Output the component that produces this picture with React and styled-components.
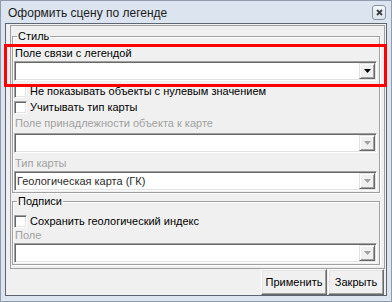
import styled, { createGlobalStyle } from "styled-components";

const GlobalStyle = createGlobalStyle`
  html, body {
    margin: 0;
    padding: 0;
    background: #ffffff;
  }
  body {
    font-family: "Liberation Sans", Arial, sans-serif;
    font-size: 11px;
    color: #000;
  }
`;

const Window = styled.div`
  position: relative;
  box-sizing: border-box;
  width: 392px;
  height: 302px;
  display: flex;
  flex-direction: column;
  padding: 0 4px 5px 4px;
  background: #dbe4ef;
  border: 1px solid #8f9cab;
`;

const TitleBar = styled.div`
  height: 22px;
  display: flex;
  align-items: center;
  justify-content: space-between;
  padding: 1px 1px 0 3px;
  box-sizing: border-box;
`;

const Title = styled.span`
  font-size: 12px;
  color: #1b1b1b;
`;

const CloseButton = styled.div`
  box-sizing: border-box;
  width: 14px;
  height: 15px;
  display: flex;
  align-items: center;
  justify-content: center;
  border: 1px solid #8894a3;
  border-radius: 3px;
  background: linear-gradient(#f4f7fa, #dde4ec);
`;

const Client = styled.div`
  flex: 1;
  display: flex;
  flex-direction: column;
  background: #f0f0f0;
  border: 1px solid #5c6570;
`;

const Panel = styled.div`
  flex: 1;
  display: flex;
  flex-direction: column;
  margin: 1px 1px 0 4px;
  border: 1px solid #a0a0a0;
`;

const GroupBox = styled.fieldset`
  margin: ${(p) => p.$mt}px 4px 0 1px;
  padding: ${(p) => p.$pt}px 2px 1px 1px;
  min-width: 0;
  border: 1px solid #a0a0a0;
  box-shadow: inset 1px 1px 0 #fff, 1px 1px 0 #fff;
  display: flex;
  flex-direction: column;
`;

const Legend = styled.legend`
  margin-left: 3px;
  padding: 0 1px;
  line-height: 13px;
`;

const Label = styled.div`
  height: 13px;
  line-height: 13px;
  padding-left: 1px;
  margin-top: ${(p) => p.$mt || 0}px;
  color: ${(p) => (p.$disabled ? "#a0a0a0" : "#000")};
  white-space: nowrap;
`;

const Combo = styled.div`
  box-sizing: border-box;
  height: 20px;
  margin-top: ${(p) => p.$mt || 0}px;
  display: flex;
  align-items: center;
  background: #fff;
  border-style: solid;
  border-width: 1px;
  border-color: #a0a0a0 #fff #fff #a0a0a0;
  box-shadow: inset 1px 1px 0 #696969, inset -1px -1px 0 #e3e3e3;
  padding: 1px 1px 1px 2px;
`;

const ComboText = styled.span`
  flex: 1;
  color: #2b2b2b;
  white-space: nowrap;
`;

const DropButton = styled.div`
  box-sizing: border-box;
  width: 16px;
  height: 16px;
  display: flex;
  align-items: center;
  justify-content: center;
  background: #f0f0f0;
  border-style: solid;
  border-width: 1px;
  border-color: #e3e3e3 #696969 #696969 #e3e3e3;
  box-shadow: inset 1px 1px 0 #fff, inset -1px -1px 0 #a0a0a0;
`;

const CheckRow = styled.div`
  height: 16px;
  margin-top: ${(p) => p.$mt || 0}px;
  display: flex;
  align-items: center;
  gap: 3px;
  white-space: nowrap;
`;

const CheckBox = styled.span`
  box-sizing: border-box;
  width: 13px;
  height: 13px;
  flex-shrink: 0;
  background: #fff;
  border-style: solid;
  border-width: 1px;
  border-color: #a0a0a0 #fff #fff #a0a0a0;
  box-shadow: inset 1px 1px 0 #696969, inset -1px -1px 0 #e3e3e3;
`;

const ButtonBar = styled.div`
  height: 26px;
  display: flex;
  justify-content: flex-end;
  gap: 1px;
  padding-right: 2px;
`;

const Button = styled.div`
  box-sizing: border-box;
  width: ${(p) => p.$w}px;
  height: 26px;
  display: flex;
  align-items: center;
  justify-content: center;
  background: #f0f0f0;
  border-style: solid;
  border-width: 1px;
  border-color: #fff #696969 #696969 #fff;
  box-shadow: inset -1px -1px 0 #a0a0a0, inset 1px 1px 0 #e3e3e3;
`;

const Highlight = styled.div`
  position: absolute;
  left: 3px;
  top: 43px;
  width: 383px;
  height: 43px;
  box-sizing: border-box;
  border: 3px solid #ff0000;
  pointer-events: none;
`;

function Arrow({ disabled }) {
  return (
    <svg width="7" height="4" viewBox="0 0 7 4">
      <polygon points="0,0 7,0 3.5,4" fill={disabled ? "#a0a0a0" : "#000"} />
    </svg>
  );
}

function ComboBox({ mt, text, disabled }) {
  return (
    <Combo $mt={mt}>
      <ComboText>{text}</ComboText>
      <DropButton>
        <Arrow disabled={disabled} />
      </DropButton>
    </Combo>
  );
}

function Check({ mt, children }) {
  return (
    <CheckRow $mt={mt}>
      <CheckBox />
      <span>{children}</span>
    </CheckRow>
  );
}

export default function App() {
  return (
    <>
      <GlobalStyle />
      <Window>
        <TitleBar>
          <Title>Оформить сцену по легенде</Title>
          <CloseButton>
            <svg width="7" height="7" viewBox="0 0 7 7">
              <path d="M1 1L6 6M6 1L1 6" stroke="#3a3f46" strokeWidth="1.8" />
            </svg>
          </CloseButton>
        </TitleBar>
        <Client>
          <Panel>
            <GroupBox $mt={4} $pt={4}>
              <Legend>Стиль</Legend>
              <Label>Поле связи с легендой</Label>
              <ComboBox mt={1} />
              <Check mt={2}>Не показывать объекты с нулевым значением</Check>
              <Check>Учитывать тип карты</Check>
              <Label $disabled $mt={2}>
                Поле принадлежности объекта к карте
              </Label>
              <ComboBox mt={3} disabled />
              <Label $disabled $mt={4}>
                Тип карты
              </Label>
              <ComboBox mt={1} disabled text="Геологическая карта (ГК)" />
            </GroupBox>
            <GroupBox $mt={2} $pt={5}>
              <Legend>Подписи</Legend>
              <Check>Сохранить геологический индекс</Check>
              <Label $disabled>Поле</Label>
              <ComboBox mt={1} disabled />
            </GroupBox>
          </Panel>
          <ButtonBar>
            <Button $w={66}>Применить</Button>
            <Button $w={56}>Закрыть</Button>
          </ButtonBar>
        </Client>
        <Highlight />
      </Window>
    </>
  );
}
